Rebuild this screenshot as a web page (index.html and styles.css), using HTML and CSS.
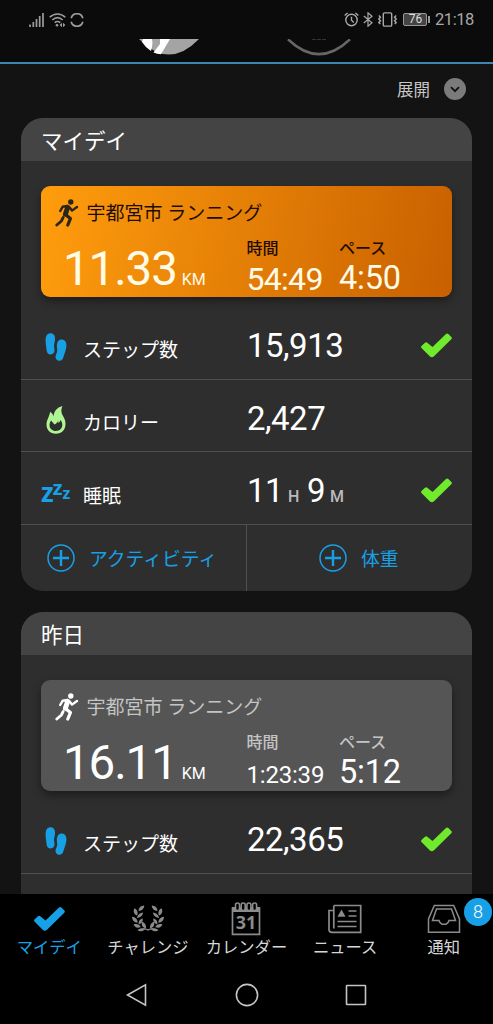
FILE: index.html
```html
<!DOCTYPE html>
<html lang="ja">
<head>
    <meta charset="UTF-8">
    <meta name="viewport" content="width=device-width, initial-scale=1.0">
    <title>マイデイ</title>
    <link rel="stylesheet" href="styles.css">
</head>
<body>
    <!-- shared icons -->
    <svg width="0" height="0" class="sprite">
        <symbol id="icon-run" viewBox="0 0 24 28">
            <circle cx="15.8" cy="3" r="2.7" fill="currentColor"/>
            <g fill="none" stroke="currentColor" stroke-linecap="round" stroke-linejoin="round">
                <path d="M12.6 8.4L10.4 15.2" stroke-width="5"/>
                <path d="M12.4 7L7.6 7.8L5.2 12" stroke-width="2.4"/>
                <path d="M14.4 8.2L17 11.6L22 8" stroke-width="2.4"/>
                <path d="M11 16L15.4 19.6L12.8 26" stroke-width="3.2"/>
                <path d="M8.2 18.4L6.4 22L1.8 26" stroke-width="2.8"/>
            </g>
        </symbol>
        <symbol id="icon-steps" viewBox="0 0 22 28">
            <path fill="currentColor" d="M5.4.2C8.600.2 10.200 2.800 10.100 6c-.1 3-1.200 4.600-1.100 7.300.1 1.600.5 2.500.5 4.300 0 2.300-1.500 3.900-3.800 3.900-2.600 0-3.900-1.700-4.100-4.300C1.200 13.800.5 10.500.6 6.600.7 2.900 2.300.3 5.400.2z"/>
            <path fill="currentColor" d="M17 6.600c3.200.4 4.700 3 4.400 6.600-.4 4.200-2 7.200-3 11-.6 2.500-2.300 3.900-4.700 3.500-2.400-.4-3.500-2.200-3.100-4.500.4-2 1.200-2.800 1.500-4.600.5-2.600-.6-4.200-.2-7.200C12.500 8.300 14.300 6.300 17 6.600z"/>
        </symbol>
        <symbol id="icon-check" viewBox="0 0 31 25">
            <path fill="currentColor" d="M.7 12.800L4 9.700c.8-.7 1.500-.7 2.300 0l5.200 4.400L25 1c.8-.8 1.600-.8 2.400 0l2.900 2.900c.8.800.8 1.500 0 2.300L13 23.200c-1.400 1.300-2.900 1.300-4.300 0L.7 15.300c-.8-.9-.8-1.700 0-2.500z"/>
        </symbol>
        <symbol id="icon-plus" viewBox="0 0 28 28">
            <circle cx="14" cy="14" r="13" fill="none" stroke="currentColor" stroke-width="1.500"/>
            <path d="M14 6v16M6 14h16" fill="none" stroke="currentColor" stroke-width="2.400"/>
        </symbol>
        <symbol id="icon-sprig" viewBox="0 0 16 28">
            <g fill="currentColor">
                <path d="M12.300.5C8.500.9 6.500 3 6.600 6 9.800 5.800 12 3.800 12.300.5z"/>
                <path d="M2.400 3.300C.9 6.500 1.900 9.300 5 10.600 6.400 7.700 5.400 4.800 2.400 3.300z"/>
                <path d="M11.200 7.600C8 8 5.600 9.600 4.800 13c3.300 0 5.700-2 6.400-5.400z"/>
                <path d="M0 11.800c.1 3.500 2 5.700 5.700 5.900C5.500 14.300 3.500 12.200 0 11.800z"/>
                <path d="M10.600 13.200c-2.800 1-4.400 3-3.900 6.300 3.100-.9 4.500-3.200 3.900-6.300z"/>
                <path d="M1.500 19.500c1.300 3 3.900 4 7.300 2.500-1.500-2.600-4.200-3.500-7.300-2.500z"/>
                <path d="M10.200 16.800c-1.300 3 .2 6 3.800 6.500.3-3.200-1-5.300-3.800-6.500z"/>
                <path d="M5.500 25.300c2.700 1.700 5.500 1.200 7.700-1.600-2.900-.8-5.600-.4-7.700 1.600z"/>
            </g>
            <path d="M11 24Q15 23.500 18.500 27" fill="none" stroke="currentColor" stroke-width="1.200"/>
        </symbol>
    </svg>

    <div class="phone">
        <div class="status-bar">
            <div class="status-left">
                <svg width="15" height="14" viewBox="0 0 15 14">
                    <path d="M1 11.500V14M4.300 9V14M7.500 6V14M10.700 3V14M14 0V14" stroke="currentColor" stroke-width="1.700"/>
                </svg>
                <svg width="17" height="14" viewBox="0 0 17 14" fill="none" stroke="currentColor" stroke-width="1.600">
                    <path d="M.7 4.300C5.200-.2 11.800-.2 16.300 4.300M3.300 7C6.500 4 10.500 4 13.700 7M5.700 9.700c1.700-1.500 3.900-1.500 5.600 0"/>
                    <circle cx="8" cy="12.300" r="1.300" fill="currentColor" stroke="none"/>
                    <path d="M13 9.800L10.600 12 13 14.200zM14 9.800L16.400 12 14 14.200z" fill="currentColor" stroke="none"/>
                </svg>
                <svg width="14" height="14" viewBox="0 0 14 14" fill="none" stroke="currentColor" stroke-width="1.700">
                    <path d="M1.200 5.200a6 6 0 0 1 11.600 0M1.200 8.800a6 6 0 0 0 11.600 0"/>
                </svg>
            </div>
            <div class="status-right">
                <svg width="15" height="15" viewBox="0 0 15 15" fill="none" stroke="currentColor" stroke-width="1.400">
                    <circle cx="7.500" cy="8" r="5.700"/>
                    <path d="M7.500 4.700V8.300L9.800 10.500M.7 3.600L3.600.9M14.300 3.600L11.400.9"/>
                </svg>
                <svg width="10" height="15" viewBox="0 0 10 15" fill="none" stroke="currentColor" stroke-width="1.200">
                    <path d="M.8 4L9 10.800 5 14.200V.8L9 4.200.8 11"/>
                </svg>
                <svg width="19" height="15" viewBox="0 0 19 15" fill="none" stroke="currentColor" stroke-width="1.400">
                    <rect x="5.300" y=".9" width="8.400" height="13.200" rx="1.200"/>
                    <path d="M.8 3.500l1.700 1.700L.8 7l1.700 1.700L.8 10.500l1.500 1.500M18.200 3.500l-1.700 1.700L18.200 7l-1.700 1.700 1.700 1.800-1.500 1.500"/>
                </svg>
                <div class="battery">76</div>
                <div class="clock">21:18</div>
            </div>
        </div>

        <div class="top-strip">
            <svg class="avatar" width="62" height="17" viewBox="0 0 62 17">
                <path d="M1 0H61Q31 31 1 0z" fill="#a4a4a4"/>
                <path d="M5 0H14C15 5 14 8 13 12Q7 8 4 3zM22 0H32L23 15.300Q19 15 15.500 13.500L22 5z" fill="#fff"/>
            </svg>
            <svg class="device" width="66" height="17" viewBox="0 0 66 17">
                <path d="M2 .3Q33 30 64 .3" fill="none" stroke="#666" stroke-width="2.600"/>
                <path d="M26 .5H40" stroke="#333" stroke-dasharray="4 1"/>
            </svg>
        </div>

        <main class="content">
            <div class="expand">
                <span>展開</span>
                <svg width="22" height="22" viewBox="0 0 22 22">
                    <circle cx="11" cy="11" r="11" fill="#7b7b7b"/>
                    <path d="M7 9.200l4 4 4-4" fill="none" stroke="#111" stroke-width="1.800"/>
                </svg>
            </div>

            <section class="card">
                <h2>マイデイ</h2>
                <div class="activity activity-today">
                    <div class="activity-title">
                        <svg width="24" height="28"><use href="#icon-run"/></svg>
                        <span>宇都宮市 ランニング</span>
                    </div>
                    <div class="metrics">
                        <div class="distance">11.33<small>KM</small></div>
                        <div class="metric"><label>時間</label><b>54:49</b></div>
                        <div class="metric"><label>ペース</label><b class="pace">4:50</b></div>
                    </div>
                </div>
                <div class="row">
                    <svg class="row-icon blue steps" width="22" height="28"><use href="#icon-steps"/></svg>
                    <span class="row-label">ステップ数</span>
                    <span class="row-value">15,913</span>
                    <svg class="check" width="31" height="25"><use href="#icon-check"/></svg>
                </div>
                <div class="row">
                    <svg class="row-icon flame" width="20" height="28" viewBox="0 0 20 28">
                        <path fill="currentColor" fill-rule="evenodd" d="M16.500 0C14.500 4.500 15.500 7.500 17.300 10.500c1.400 2.400 2.200 4.700 2.200 7.500 0 5.800-3.800 9.800-9.600 9.800C4.200 27.800.5 24 .5 18.600c0-4.800 3-8 3.600-12.800C5.900 7 7 8.500 7.500 10.400 8 5.500 10.500 1.500 16.500 0zM12.300 14.500C11.500 16.500 10 18 8.500 18.500L5 14.500C4 16 3.500 17.500 3.500 19c0 3.600 2.600 6 6.400 6s6.400-2.500 6.400-6.200c0-2-.7-3.400-1.800-4.800-.4 1.400-1 2.300-2.300 3z"/>
                    </svg>
                    <span class="row-label">カロリー</span>
                    <span class="row-value">2,427</span>
                </div>
                <div class="row">
                    <span class="row-icon zzz"><i>z</i><i>z</i><i>z</i></span>
                    <span class="row-label">睡眠</span>
                    <span class="row-value">11<small>H</small>9<small class="minutes">M</small></span>
                    <svg class="check" width="31" height="25"><use href="#icon-check"/></svg>
                </div>
                <div class="actions">
                    <a><svg width="28" height="28"><use href="#icon-plus"/></svg><span>アクティビティ</span></a>
                    <a class="weight"><svg width="28" height="28"><use href="#icon-plus"/></svg><span>体重</span></a>
                </div>
            </section>

            <section class="card">
                <h2>昨日</h2>
                <div class="activity activity-past">
                    <div class="activity-title">
                        <svg width="24" height="28"><use href="#icon-run"/></svg>
                        <span>宇都宮市 ランニング</span>
                    </div>
                    <div class="metrics">
                        <div class="distance">16.11<small>KM</small></div>
                        <div class="metric"><label>時間</label><b class="long">1:23:39</b></div>
                        <div class="metric"><label>ペース</label><b class="pace">5:12</b></div>
                    </div>
                </div>
                <div class="row">
                    <svg class="row-icon blue steps" width="22" height="28"><use href="#icon-steps"/></svg>
                    <span class="row-label">ステップ数</span>
                    <span class="row-value">22,365</span>
                    <svg class="check" width="31" height="25"><use href="#icon-check"/></svg>
                </div>
                <div class="row"></div>
            </section>
        </main>

        <nav class="tabs">
            <a class="active">
                <svg width="31" height="30"><use href="#icon-check"/></svg>
                <span>マイデイ</span>
            </a>
            <a>
                <svg width="34" height="30" viewBox="0 0 34 30">
                    <use href="#icon-sprig" x="1" y="1" width="16" height="28"/>
                    <use href="#icon-sprig" x="1" y="1" width="16" height="28" transform="translate(34 0) scale(-1 1)"/>
                </svg>
                <span>チャレンジ</span>
            </a>
            <a>
                <svg width="30" height="34" viewBox="0 0 30 34">
                    <path d="M1.500 6H28.500V32.300H1.500z" fill="none" stroke="currentColor" stroke-width="1.700"/>
                    <path d="M1 5H29V10H1z" fill="currentColor"/>
                    <g fill="#000" stroke="currentColor" stroke-width="1.600">
                        <rect x="4.500" y="1" width="4" height="7.500" rx="2"/>
                        <rect x="10.200" y="1" width="4" height="7.500" rx="2"/>
                        <rect x="15.900" y="1" width="4" height="7.500" rx="2"/>
                        <rect x="21.600" y="1" width="4" height="7.500" rx="2"/>
                    </g>
                    <text x="15" y="27" class="cal-day">31</text>
                </svg>
                <span>カレンダー</span>
            </a>
            <a>
                <svg width="34" height="30" viewBox="0 0 34 30" fill="none" stroke="currentColor" stroke-width="1.700">
                    <path d="M5.800 1.500H32.700V28.300H4C2.300 28.300 1 27.300 1 25.500V6.500H5.800M5.800 1.500V24.500"/>
                    <path d="M20.500 7H28.500M20.500 12H28.500M9.500 17.500H28.500M9.500 22.500H28.500"/>
                    <path d="M9.500 12.800L13.500 5.500 17.500 12.800z" fill="currentColor" stroke="none"/>
                </svg>
                <span>ニュース</span>
            </a>
            <a>
                <svg width="34" height="30" viewBox="0 0 34 30" fill="none" stroke="currentColor" stroke-width="1.500">
                    <path d="M7.300 1.500H26.700L32.500 15V28.300H1.500V15z"/>
                    <path d="M9.500 5H24.500L28.500 16.500H22C21.500 18.500 20.500 19.700 19 20.300H15C13.500 19.700 12.500 18.500 12 16.500H5.500z"/>
                </svg>
                <span>通知</span>
                <em class="badge">8</em>
            </a>
        </nav>

        <div class="system-nav">
            <svg width="24" height="24" viewBox="0 0 24 24"><path d="M2.500 12L20.500 1.800V22.200z"/></svg>
            <svg width="24" height="24" viewBox="0 0 24 24"><circle cx="12" cy="12" r="10.600"/></svg>
            <svg width="24" height="24" viewBox="0 0 24 24"><rect x="2.500" y="2.500" width="19" height="19" rx=".5"/></svg>
        </div>
    </div>
</body>
</html>
```

FILE: styles.css
```css
:root {
    --blue: #18a0e6;
    --green: #70ea2c;
    --panel: #2e2e2e;
    --panel-head: #444;
    --line: #505050;
}

* {
    box-sizing: border-box;
}

body {
    margin: 0;
    background: #000;
    color: #fff;
    font-family: Roboto, "Noto Sans CJK JP", sans-serif;
    line-height: 1;
}

svg {
    display: block;
    flex: none;
}

.sprite {
    position: absolute;
}

.phone {
    display: flex;
    flex-direction: column;
    height: 1024px;
    overflow: hidden;
}

.status-bar {
    display: flex;
    justify-content: space-between;
    align-items: center;
    height: 39px;
    padding: 0 19px 0 29px;
    background: #0b0b0b;
    color: #9c9c9c;
    flex: none;
}

.status-left,
.status-right {
    display: flex;
    align-items: center;
    gap: 4.5px;
}

.status-right {
    color: #a8a8a8;
}

.battery {
    position: relative;
    width: 24px;
    height: 13px;
    margin-left: 2px;
    border: 1px solid #999;
    border-radius: 2px;
    background: #444;
    color: #ddd;
    font-size: 12px;
    line-height: 11px;
    text-align: center;
}

.battery::after {
    content: "";
    position: absolute;
    right: -4px;
    top: 2px;
    width: 2px;
    height: 7px;
    background: #999;
}

.clock {
    margin-left: 3px;
    padding-top: 1px;
    font-size: 16.5px;
    letter-spacing: -0.4px;
}

.top-strip {
    display: flex;
    height: 25px;
    padding-left: 138px;
    gap: 86px;
    background: #0b0b0b;
    border-bottom: 2px solid #3d86b0;
    flex: none;
}

.content {
    flex: 1;
    min-height: 0;
    overflow: hidden;
    padding: 0 21px;
    background: #131313;
}

.expand {
    display: flex;
    justify-content: flex-end;
    align-items: center;
    gap: 14px;
    height: 54px;
    padding: 0 6px 4px 0;
    color: #c8c8c8;
    font-size: 16.5px;
}

.expand span {
    padding-top: 4px;
}

.card {
    margin-bottom: 21px;
    border-radius: 22px;
    background: var(--panel);
    overflow: hidden;
}

.card h2 {
    height: 43px;
    margin: 0;
    padding-left: 20px;
    background: var(--panel-head);
    font-size: 21.5px;
    font-weight: 400;
    line-height: 47px;
}

.activity {
    height: 111.5px;
    margin: 24.5px 20px 10px;
    padding: 13px 0 0 14px;
    border-radius: 9px;
    box-shadow: 0 4px 8px rgba(0, 0, 0, 0.4);
}

.activity-today {
    background: linear-gradient(100deg, #ff9d0d, #c96000);
    color: #1e0c04;
}

.activity-past {
    background: #555;
    color: #c4c4c4;
}

.activity-title {
    display: flex;
    align-items: center;
    gap: 7.5px;
    height: 28px;
    font-size: 19px;
}

.activity-title span {
    padding-top: 2px;
}

.activity-today svg {
    color: #2c2618;
}

.activity-past svg {
    color: #fff;
}

.metrics {
    display: flex;
    align-items: flex-end;
    height: 68px;
}

.distance {
    width: 191.5px;
    padding: 0 0 1px 8px;
    color: #fff;
    font-size: 47.5px;
    letter-spacing: -1.1px;
}

.distance small {
    margin-left: 5px;
    font-size: 16px;
    letter-spacing: 0;
}

.metric {
    width: 92.5px;
}

.metric label {
    display: block;
    font-size: 16px;
    font-weight: 500;
}

.metric b {
    display: flex;
    align-items: flex-end;
    height: 38px;
    color: #fff;
    font-size: 32px;
    font-weight: 400;
    letter-spacing: -0.7px;
}

.metric .pace {
    font-size: 32.5px;
    letter-spacing: -0.2px;
}

.metric .long {
    padding-bottom: 2px;
    font-size: 24px;
    letter-spacing: -0.2px;
}

.activity-today .distance,
.activity-today b {
    color: #fffbe6;
}

.row {
    display: grid;
    grid-template-columns: 42px 164px 1fr 31px;
    align-items: center;
    height: 72.7px;
    padding: 0 20px;
    border-bottom: 1px solid var(--line);
}

.row-icon {
    margin-top: 8px;
}

.blue {
    color: var(--blue);
}

.steps {
    margin-left: 4px;
}

.flame {
    margin-left: 5px;
    color: #b0f593;
}

.zzz {
    display: flex;
    color: var(--blue);
    font: bold 26px "Open Sans", sans-serif;
    line-height: 1;
}

.zzz i {
    font-style: normal;
}

.zzz i:nth-child(2) {
    margin-top: -1px;
    margin-left: -1px;
    font-size: 20px;
}

.zzz i:nth-child(3) {
    margin-top: 6px;
    font-size: 16px;
}

.row-label {
    padding-top: 16px;
    font-size: 19px;
}

.row-value {
    padding-top: 5px;
    font-size: 33px;
    letter-spacing: -0.5px;
    white-space: nowrap;
}

.row-value small {
    margin: 0 8px 0 5px;
    color: #bbb;
    font-size: 16px;
    font-weight: 500;
}

.row-value .minutes {
    margin-right: 0;
}

.check {
    margin-top: 5px;
    color: var(--green);
}

.actions {
    display: flex;
    height: 66px;
    color: var(--blue);
    font-size: 18.8px;
}

.actions a {
    display: flex;
    align-items: center;
    gap: 14px;
    flex: 1;
    padding-left: 26px;
}

.actions span {
    padding-top: 4px;
}

.actions .weight {
    flex: none;
    width: 226px;
    padding-left: 72px;
    border-left: 1px solid var(--line);
}

.tabs {
    display: flex;
    height: 71px;
    padding-top: 8px;
    background: #000;
    flex: none;
}

.tabs a {
    position: relative;
    flex: 1;
    display: flex;
    flex-direction: column;
    align-items: center;
    justify-content: space-between;
    height: 54px;
    color: #8b8b8b;
}

.tabs a svg {
    height: 34px;
}

.tabs span {
    color: #d6d6d6;
    font-size: 16.3px;
    white-space: nowrap;
}

.tabs .active,
.tabs .active span {
    color: var(--blue);
}

.cal-day {
    fill: currentColor;
    font-family: "Noto Sans", sans-serif;
    font-size: 18px;
    font-weight: 700;
    text-anchor: middle;
}

.badge {
    position: absolute;
    top: -4px;
    right: 1px;
    width: 28px;
    height: 28px;
    border-radius: 50%;
    background: #18a0e6;
    color: #fff;
    font-size: 18px;
    font-style: normal;
    font-weight: 300;
    line-height: 28px;
    text-align: center;
}

.system-nav {
    display: flex;
    justify-content: center;
    gap: 85.5px;
    height: 59px;
    padding-top: 18px;
    background: #000;
    flex: none;
}

.system-nav svg {
    fill: none;
    stroke: #c4c4c4;
    stroke-width: 1.6;
}
```
